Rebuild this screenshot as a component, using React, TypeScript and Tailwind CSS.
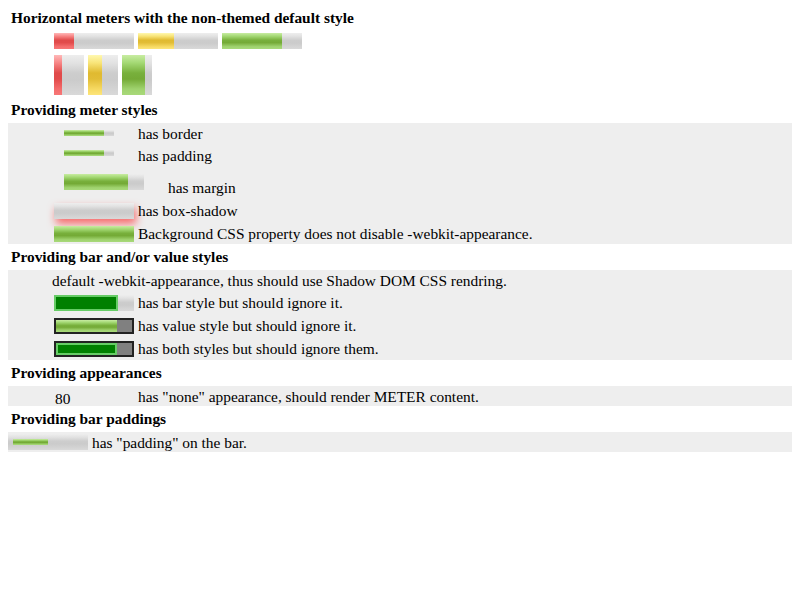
const track = 'bg-[linear-gradient(to_bottom,#eeeeee_0%,#e2e2e2_20%,#cdcdcd_45%,#cbcbcb_62%,#d9d9d9_100%)]';
const green = 'bg-[linear-gradient(to_bottom,#c8eca2_0%,#a3d873_20%,#78b03c_45%,#74aa36_60%,#9fd26e_85%,#a8d97a_100%)]';
const red = 'bg-[linear-gradient(to_bottom,#ffb8b8_0%,#f78585_20%,#e04a4a_45%,#e24b4b_60%,#f46c6c_85%,#f77777_100%)]';
const yellow = 'bg-[linear-gradient(to_bottom,#fff8b0_0%,#f8e478_20%,#e0ba30_45%,#e2bd36_60%,#f6d962_85%,#fde57a_100%)]';

function Meter({ size, fill, value }: { size: string; fill: string; value: string }) {
  return (
    <div className={`${size} ${track} flex shrink-0`}>
      <div className={`${value} h-full ${fill}`} />
    </div>
  );
}

function Heading({ children }: { children: React.ReactNode }) {
  return <div className="h-[26px] pl-[3px] text-[15.4px] font-bold leading-[26px]">{children}</div>;
}

export default function App() {
  return (
    <div className="h-[600px] w-[800px] bg-white px-[8px] pt-[5px] font-['Liberation_Serif',serif] text-[15.4px] leading-[18px] text-black">
      <Heading>Horizontal meters with the non-themed default style</Heading>

      <div className="mt-[2px] ml-[46px] flex gap-[4px]">
        <Meter size="w-[80px] h-[16px]" fill={red} value="w-[25%]" />
        <Meter size="w-[80px] h-[16px]" fill={yellow} value="w-[45%]" />
        <Meter size="w-[80px] h-[16px]" fill={green} value="w-[75%]" />
      </div>
      <div className="mt-[6px] ml-[46px] flex gap-[4px]">
        <Meter size="w-[30px] h-[40px]" fill={red} value="w-[8px]" />
        <Meter size="w-[30px] h-[40px]" fill={yellow} value="w-[14px]" />
        <Meter size="w-[30px] h-[40px]" fill={green} value="w-[23px]" />
      </div>

      <div className="mt-[2px]">
        <Heading>Providing meter styles</Heading>
      </div>
      <div className="bg-[#eeeeee]">
        <div className="flex h-[22px] items-start">
          <div className="mt-[7px] ml-[56px]">
            <Meter size="w-[50px] h-[6px]" fill={green} value="w-[80%]" />
          </div>
          <span className="mt-[2px] ml-[24px]">has border</span>
        </div>
        <div className="flex h-[23px] items-start">
          <div className="mt-[5px] ml-[56px]">
            <Meter size="w-[50px] h-[6px]" fill={green} value="w-[80%]" />
          </div>
          <span className="mt-[2px] ml-[24px]">has padding</span>
        </div>
        <div className="flex h-[31px] items-start">
          <div className="mt-[6px] ml-[56px]">
            <Meter size="w-[80px] h-[16px]" fill={green} value="w-[80%]" />
          </div>
          <span className="mt-[11px] ml-[24px]">has margin</span>
        </div>
        <div className="flex h-[23px] items-start">
          <div className={`mt-[4px] ml-[46px] h-[16px] w-[80px] ${track} shadow-[2px_5px_8px_rgba(255,0,0,0.55)]`} />
          <span className="mt-[3px] ml-[4px]">has box-shadow</span>
        </div>
        <div className="flex h-[22px] items-start">
          <div className="mt-[4px] ml-[46px]">
            <Meter size="w-[80px] h-[16px]" fill={green} value="w-full" />
          </div>
          <span className="mt-[3px] ml-[4px]">Background CSS property does not disable -webkit-appearance.</span>
        </div>
      </div>

      <Heading>Providing bar and/or value styles</Heading>
      <div className="bg-[#eeeeee]">
        <div className="h-[22px] pt-[2px] pl-[44px]">default -webkit-appearance, thus should use Shadow DOM CSS rendring.</div>
        <div className="flex h-[23px] items-start">
          <div className={`mt-[3px] ml-[46px] flex h-[16px] w-[80px] ${track}`}>
            <div className="h-full w-[64px] border-2 border-[#66cc66] bg-[#008000]" />
          </div>
          <span className="mt-[2px] ml-[4px]">has bar style but should ignore it.</span>
        </div>
        <div className="flex h-[23px] items-start">
          <div className="mt-[3px] ml-[46px] flex h-[16px] w-[80px] border-2 border-[#222222] bg-[#808080]">
            <div className={`h-full w-[61px] ${green}`} />
          </div>
          <span className="mt-[2px] ml-[4px]">has value style but should ignore it.</span>
        </div>
        <div className="flex h-[22px] items-start">
          <div className="mt-[3px] ml-[46px] flex h-[16px] w-[80px] border-2 border-[#222222] bg-[#808080]">
            <div className="h-full w-[61px] border-2 border-[#66cc66] bg-[#008000]" />
          </div>
          <span className="mt-[2px] ml-[4px]">has both styles but should ignore them.</span>
        </div>
      </div>

      <Heading>Providing appearances</Heading>
      <div className="flex h-[20px] items-start bg-[#eeeeee]">
        <span className="mt-[4px] ml-[47px] w-[83px]">80</span>
        <span className="mt-[2px]">has "none" appearance, should render METER content.</span>
      </div>

      <Heading>Providing bar paddings</Heading>
      <div className="flex h-[20px] items-start bg-[#eeeeee]">
        <div className={`mt-[2px] h-[16px] w-[80px] p-[5px] ${track}`}>
          <div className={`h-full w-[35px] ${green}`} />
        </div>
        <span className="mt-[2px] ml-[4px]">has "padding" on the bar.</span>
      </div>
    </div>
  );
}
